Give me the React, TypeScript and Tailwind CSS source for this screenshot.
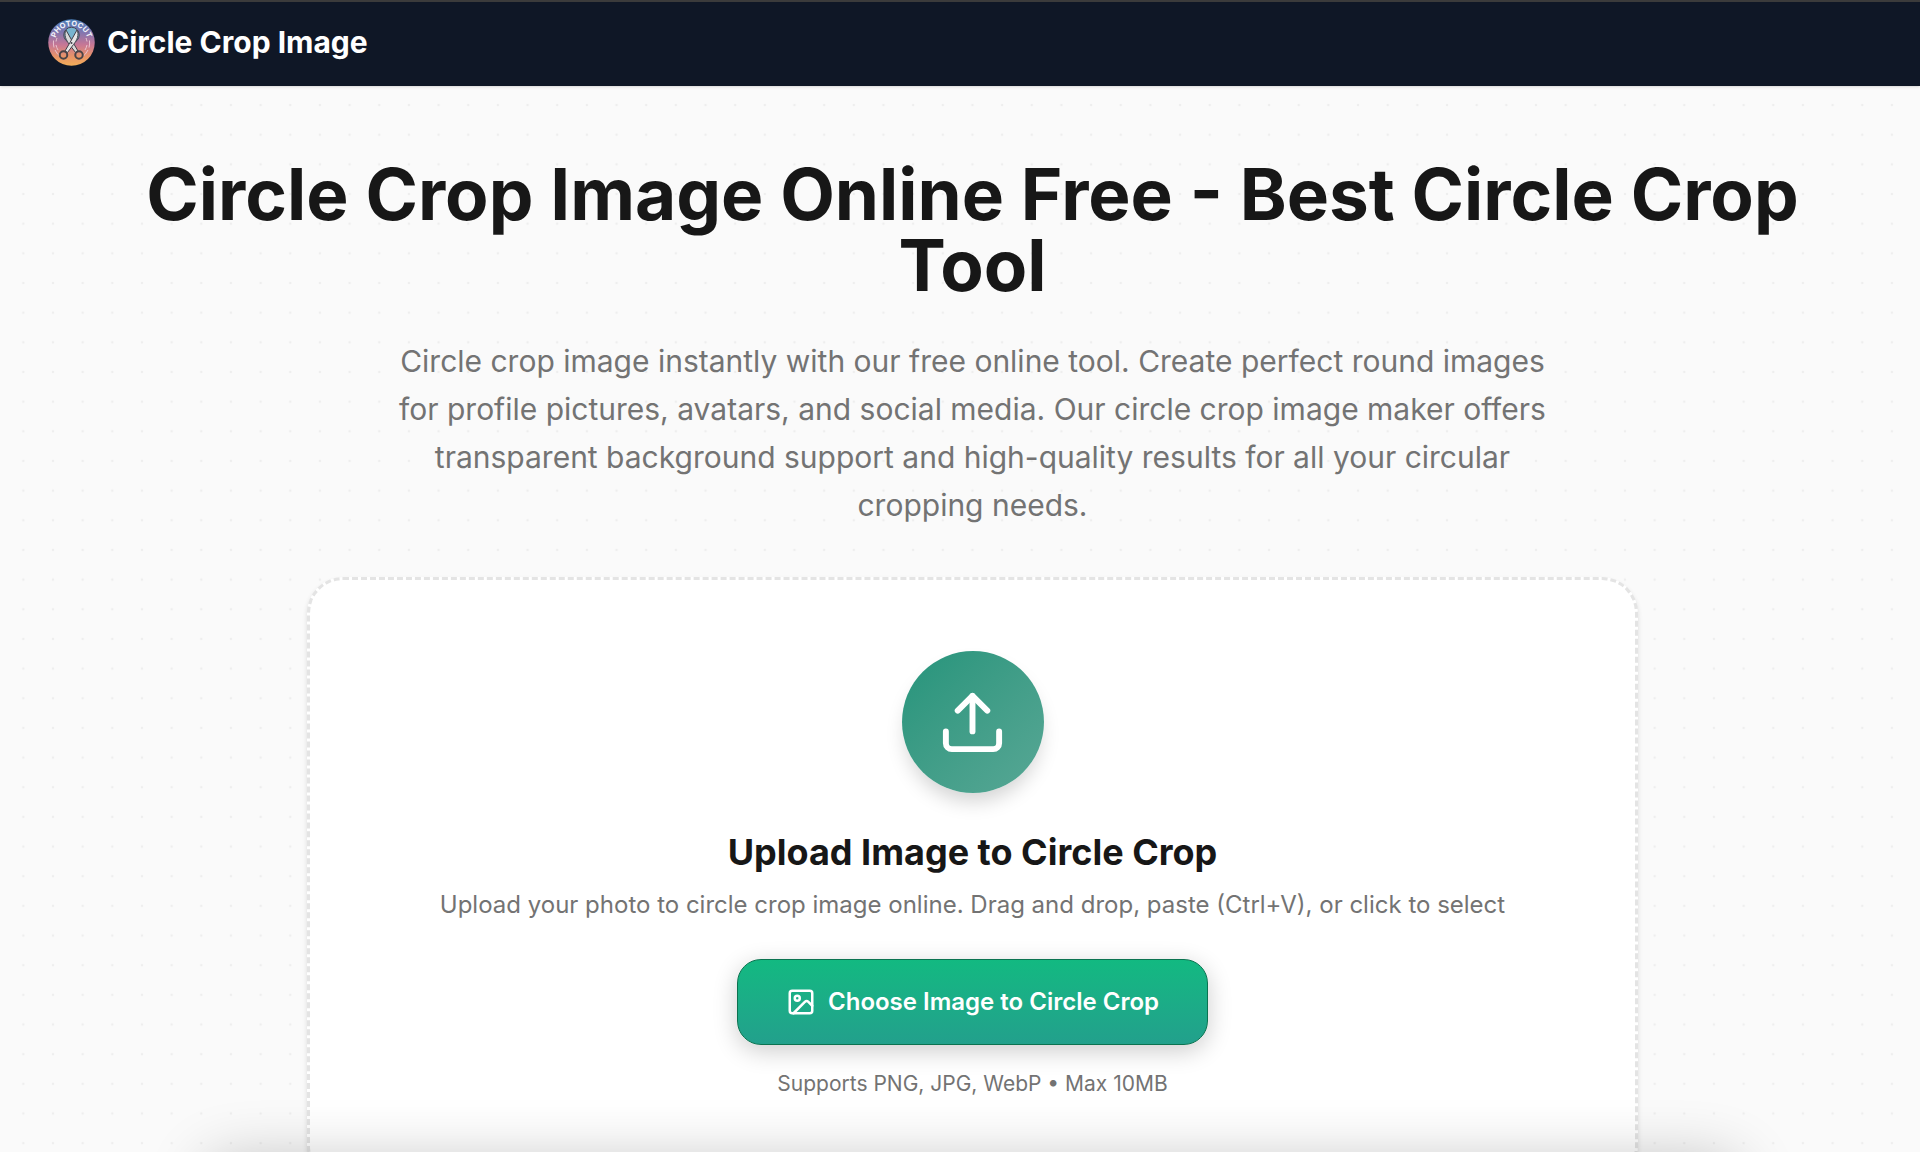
import { Image } from "lucide-react";

function DotGrid() {
  return (
    <svg className="pointer-events-none absolute inset-0 h-full w-full" aria-hidden="true">
      <defs>
        <pattern id="dots" x="8.5" y="90.2" width="29.66" height="29.66" patternUnits="userSpaceOnUse">
          <circle cx="14.83" cy="14.83" r="1.3" fill="#eeeeee" />
        </pattern>
      </defs>
      <rect width="100%" height="100%" fill="url(#dots)" />
    </svg>
  );
}

function Logo() {
  return (
    <svg className="size-[47px] shrink-0" viewBox="0 0 94 94" aria-hidden="true">
      <defs>
        <linearGradient id="badge" x1="0" y1="0" x2="0" y2="1">
          <stop offset="0" stopColor="#4a7fb8" />
          <stop offset="0.28" stopColor="#8176b0" />
          <stop offset="0.55" stopColor="#c77795" />
          <stop offset="0.8" stopColor="#e89468" />
          <stop offset="1" stopColor="#f3ae58" />
        </linearGradient>
        <path id="badge-arc" d="M 14 47 A 33 33 0 0 1 80 47" />
      </defs>
      <circle cx="47" cy="47" r="46.5" fill="url(#badge)" />
      <g fill="none" stroke="#e9c3cf" strokeWidth="2">
        <path d="M11 43 A36 36 0 0 0 12 57 M14 62 A36 36 0 0 0 27 77" />
        <path d="M83 43 A36 36 0 0 1 82 57 M80 62 A36 36 0 0 1 67 77" />
        <path d="M18 38 A31 31 0 0 0 16 45 M16 52 A31 31 0 0 0 20 62" />
        <path d="M76 38 A31 31 0 0 1 78 45 M78 52 A31 31 0 0 1 74 62" />
      </g>
      <text fill="#f4f4fa" fontFamily="Inter, sans-serif" fontSize="15" fontWeight="700">
        <textPath href="#badge-arc" startOffset="50%" textAnchor="middle">
          PHOTOCUT
        </textPath>
      </text>
      <circle cx="47" cy="32" r="15.5" fill="#78b5cf" stroke="#4a4654" strokeWidth="2" />
      <g stroke="#41404a" strokeWidth="2" strokeLinejoin="round">
        <path d="M36 22 C31 31 36 43 43 51 L55 67 L60 64 L50 47 Z" fill="#d8d8d8" />
        <path d="M58 22 C63 31 58 43 51 51 L39 67 L34 64 L44 47 Z" fill="#e6e6e6" />
      </g>
      <circle cx="47" cy="48" r="2" fill="#41404a" />
      <g fill="none" stroke="#4a4447" strokeWidth="4">
        <circle cx="31" cy="72" r="7.5" />
        <circle cx="62" cy="72" r="7.5" />
      </g>
    </svg>
  );
}

function UploadIcon() {
  return (
    <svg
      className="size-[71px]"
      viewBox="0 0 24 24"
      fill="none"
      stroke="currentColor"
      strokeWidth="2"
      strokeLinecap="round"
      strokeLinejoin="round"
      aria-hidden="true"
    >
      <path d="M21 15v4a2 2 0 0 1-2 2H5a2 2 0 0 1-2-2v-4" />
      <path d="M17 8l-5-5-5 5" />
      <path d="M12 3v12" />
    </svg>
  );
}

function Header() {
  return (
    <header className="relative z-10 border-t-2 border-[#3b3b3b] bg-[#0f1726] px-12 pt-4 pb-5 shadow-sm">
      <a href="#" className="flex items-center gap-3 text-white">
        <Logo />
        <span className="text-[30px] leading-[48px] font-bold">Circle Crop Image</span>
      </a>
    </header>
  );
}

function UploadCard() {
  return (
    <section className="mx-auto flex w-full max-w-[1331px] flex-col items-center rounded-[36px] border-3 border-dashed border-[#e4e4e4] bg-white px-[71px] pt-[71px] pb-20 shadow-[0_3px_5px_rgba(0,0,0,0.12)]">
      <div className="flex size-[142px] items-center justify-center rounded-full bg-linear-to-br from-[#24947b] to-[#57a795] text-white shadow-[0_12px_20px_-4px_rgba(0,0,0,0.18)]">
        <UploadIcon />
      </div>
      <h2 className="mt-9 text-[36px] leading-[46px] font-bold text-[#171717]">
        Upload Image to Circle Crop
      </h2>
      <p className="mt-3 text-center text-[24px] leading-[36px] text-[#737373]">
        Upload your photo to circle crop image online. Drag and drop, paste (Ctrl+V), or click to select
      </p>
      <button
        type="button"
        className="mt-9 flex items-center gap-3 rounded-[24px] border border-[#0b7350] bg-linear-to-b from-[#12b981] to-[#22a08c] px-12 py-6 text-[24px] leading-[36px] font-semibold text-white shadow-[0_6px_24px_rgba(0,0,0,0.2)]"
      >
        <Image className="size-[30px]" aria-hidden="true" />
        Choose Image to Circle Crop
      </button>
      <p className="mt-6 text-[21px] leading-[30px] text-[#737373]">
        Supports PNG, JPG, WebP • Max 10MB
      </p>
    </section>
  );
}

export default function App() {
  return (
    <div className="relative h-screen overflow-hidden bg-[#fafafa] font-[Inter,sans-serif]">
      <DotGrid />
      <Header />
      <main className="relative flex flex-col pt-[73px] pl-[25px]">
        <h1 className="mx-auto max-w-[1760px] text-center text-[71px] leading-[71px] font-bold text-[#171717]">
          Circle Crop Image Online Free - Best Circle Crop Tool
        </h1>
        <p className="mx-auto mt-9 mb-12 max-w-[1152px] text-center text-[30px] leading-[48px] text-[#737373]">
          Circle crop image instantly with our free online tool. Create perfect round images for
          profile pictures, avatars, and social media. Our circle crop image maker offers
          transparent background support and high-quality results for all your circular cropping
          needs.
        </p>
        <UploadCard />
      </main>
      {/* soft shade rising from the bottom edge */}
      <div className="pointer-events-none absolute top-full right-[180px] left-[205px] h-24 rounded-3xl shadow-[0_8px_60px_rgba(0,0,0,0.24)]" />
    </div>
  );
}
